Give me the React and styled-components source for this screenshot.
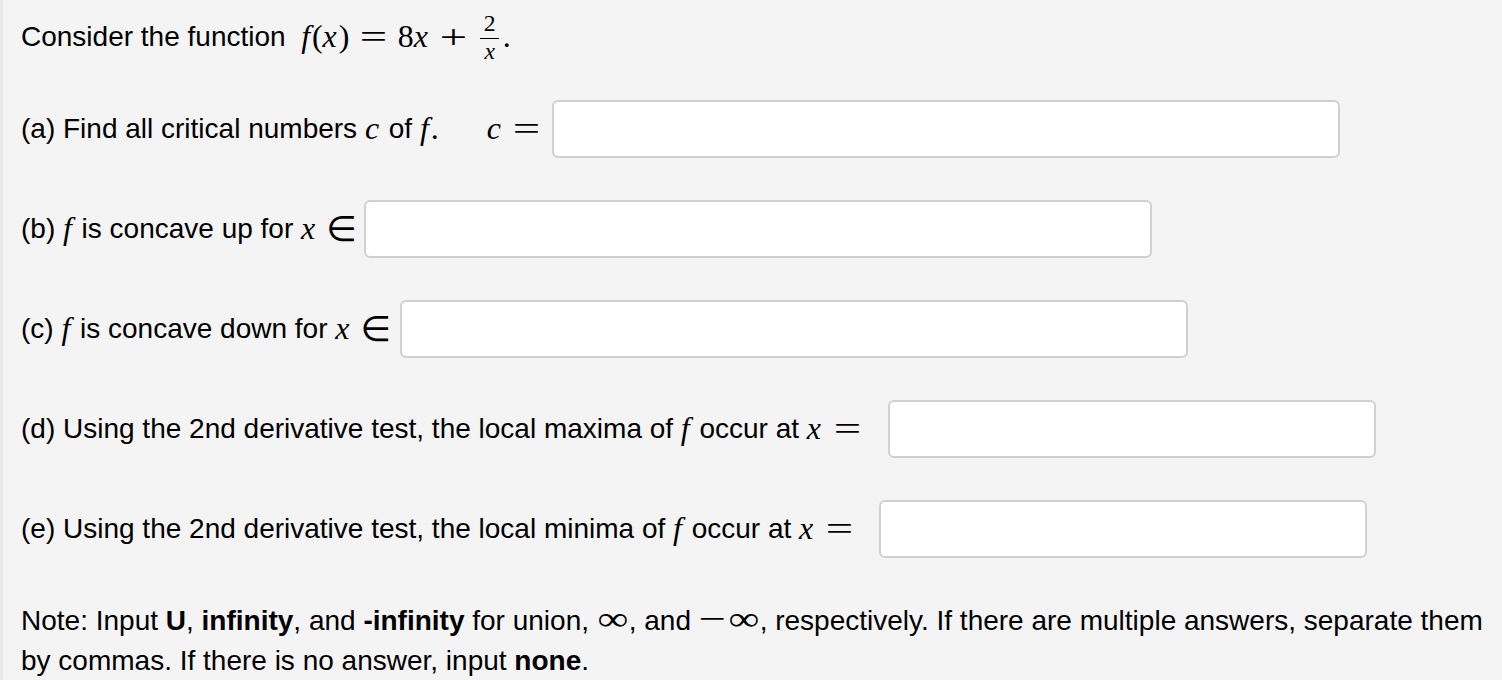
import React from "react";
import styled, { createGlobalStyle } from "styled-components";

const GlobalStyle = createGlobalStyle`
  html, body {
    margin: 0;
    padding: 0;
    background: #f4f4f4;
  }
  body {
    font-family: "Liberation Sans", Arial, Helvetica, sans-serif;
    font-size: 28px;
    color: #000;
  }
`;

const Page = styled.div`
  min-height: 680px;
  border-left: 3px solid #e9e9e9;
  padding: 0 16px 0 18px;
  box-sizing: border-box;
`;

const Title = styled.div`
  height: 74px;
  display: flex;
  align-items: center;
  white-space: nowrap;
`;

const Row = styled.div`
  display: flex;
  align-items: center;
  height: 58px;
  margin-top: ${(p) => p.$top || 42}px;
  white-space: nowrap;
`;

const Math = styled.span`
  font-family: "Liberation Serif", "Times New Roman", serif;
  font-size: 1.14em;
  margin-left: ${(p) => p.$left || 0}px;
  display: inline-flex;
  align-items: center;
`;

const V = styled.i`
  font-style: italic;
  padding-right: 0.06em;
`;

/* relation / binary operator, widened to look like the TeX glyphs */
const Op = styled.span`
  display: inline-block;
  font-size: 1.05em;
  line-height: 1;
  transform: scaleX(1.45);
  margin: 0 ${(p) => (p.$tight ? 0.18 : 0.44)}em 0 ${(p) => p.$lead ?? 0.44}em;
`;

const Elem = styled.span`
  font-family: "DejaVu Sans", sans-serif;
  font-size: 1.1em;
  line-height: 1;
  margin-left: 0.26em;
`;

const Inf = styled.span`
  display: inline-block;
  font-size: 1.05em;
  line-height: 1;
  transform: scaleX(1.3);
  margin: 0 0.12em;
`;

const Frac = styled.span`
  display: inline-flex;
  flex-direction: column;
  align-items: center;
  font-size: 0.74em;
  line-height: 1;
  margin: 0 0.16em 0 0.1em;
  position: relative;
  top: 0.04em;
`;

const Num = styled.span`
  padding: 0 0.14em 0.08em;
  border-bottom: 1.5px solid #000;
`;

const Den = styled.span`
  padding-top: 0.04em;
  font-style: italic;
`;

const AnswerBox = styled.input`
  width: ${(p) => p.$w}px;
  height: 58px;
  margin-left: ${(p) => p.$gap}px;
  flex-shrink: 0;
  box-sizing: border-box;
  border: 2px solid #d0d0d0;
  border-radius: 6px;
  background: #fff;
  font-size: 22px;
  padding: 0 10px;
  outline: none;
`;

const Note = styled.p`
  margin: 43px 0 0;
  line-height: 40px;
  max-width: 1475px;
`;

const F = () => <Math><V>f</V></Math>;

export default function App() {
  return (
    <>
      <GlobalStyle />
      <Page>
        <Title>
          Consider the function&nbsp;&nbsp;
          <Math>
            <V>f</V>(<V>x</V>)<Op>=</Op>8<V>x</V><Op>+</Op>
            <Frac>
              <Num>2</Num>
              <Den>x</Den>
            </Frac>
            .
          </Math>
        </Title>

        <Row $top={26}>
          (a) Find all critical numbers&nbsp;<Math><V>c</V></Math>&nbsp;of&nbsp;<Math><V>f</V>.</Math>
          <Math $left={48}>
            <V>c</V><Op $tight>=</Op>
          </Math>
          <AnswerBox $w={788} $gap={10} />
        </Row>

        <Row>
          (b)&nbsp;<F />&nbsp;is concave up for&nbsp;
          <Math><V>x</V><Elem>∈</Elem></Math>
          <AnswerBox $w={788} $gap={7} />
        </Row>

        <Row>
          (c)&nbsp;<F />&nbsp;is concave down for&nbsp;
          <Math><V>x</V><Elem>∈</Elem></Math>
          <AnswerBox $w={788} $gap={9} />
        </Row>

        <Row>
          (d) Using the 2nd derivative test, the local maxima of&nbsp;<F />&nbsp;occur at&nbsp;
          <Math><V>x</V><Op $tight>=</Op></Math>
          <AnswerBox $w={488} $gap={25} />
        </Row>

        <Row>
          (e) Using the 2nd derivative test, the local minima of&nbsp;<F />&nbsp;occur at&nbsp;
          <Math><V>x</V><Op $tight>=</Op></Math>
          <AnswerBox $w={488} $gap={24} />
        </Row>

        <Note>
          Note: Input <b>U</b>, <b>infinity</b>, and <b>-infinity</b> for union,{" "}
          <Math><Inf>∞</Inf></Math>, and <Math><Op $tight $lead={0.12}>−</Op><Inf>∞</Inf></Math>,
          respectively. If there are multiple answers, separate them by commas. If there is no
          answer, input <b>none</b>.
        </Note>
      </Page>
    </>
  );
}
